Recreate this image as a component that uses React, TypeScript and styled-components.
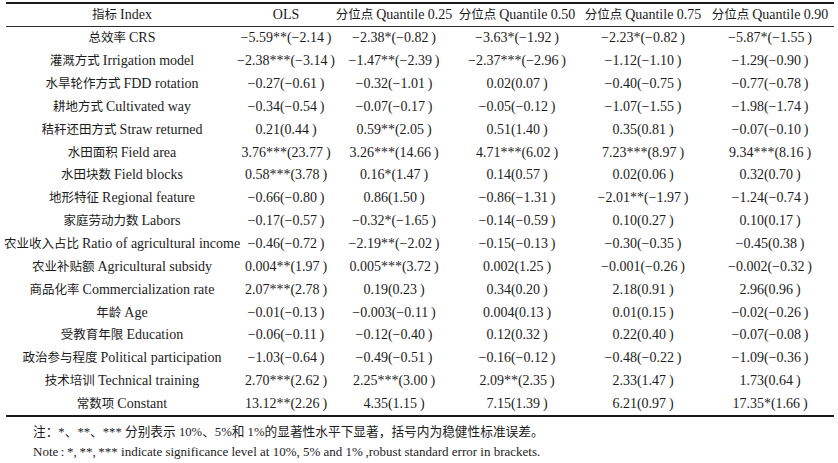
import React from "react";
import styled, { createGlobalStyle } from "styled-components";

const Global = createGlobalStyle`
  html, body { margin: 0; padding: 0; background: #ffffff; }
  body {
    font-family: "Liberation Serif", "Noto Sans CJK SC", serif;
    color: #1c1c1c;
  }
`;

const Page = styled.div`
  width: 838px;
  height: 463px;
  padding: 2px 0 0 6px;
  box-sizing: border-box;
  overflow: hidden;
`;

const Table = styled.table`
  width: 828px;
  table-layout: fixed;
  border-collapse: collapse;
  border-top: 2px solid #1a1a1a;
  border-bottom: 2px solid #1a1a1a;
  font-size: 14px;
`;

const HeadRow = styled.tr`
  border-bottom: 1px solid #2a2a2a;
`;

const Cell = styled.td`
  padding: 0;
  height: 22.85px;
  white-space: nowrap;
  vertical-align: middle;
`;

const HeadCell = styled.th`
  padding: 0;
  height: 22px;
  font-weight: normal;
  white-space: nowrap;
  vertical-align: middle;
`;

const Center = styled.div`
  display: flex;
  justify-content: center;
  align-items: center;
  line-height: 16px;
`;

const Han = styled.span`
  font-size: 12.5px;
  margin-right: 3px;
`;

const Notes = styled.div`
  margin-top: 6px;
  padding-left: 27px;
  line-height: 19px;
  white-space: nowrap;
`;

const NoteLine = styled.div<{ $size: number }>`
  font-size: ${(p) => p.$size}px;
`;

const widths = [232, 96, 120, 126, 126, 128];

const headers = [
  "指标 Index",
  "OLS",
  "分位点 Quantile 0.25",
  "分位点 Quantile 0.50",
  "分位点 Quantile 0.75",
  "分位点 Quantile 0.90",
];

const rows: string[][] = [
  ["总效率 CRS", "−5.59**(−2.14)", "−2.38*(−0.82)", "−3.63*(−1.92)", "−2.23*(−0.82)", "−5.87*(−1.55)"],
  ["灌溉方式 Irrigation model", "−2.38***(−3.14)", "−1.47**(−2.39)", "−2.37***(−2.96)", "−1.12(−1.10)", "−1.29(−0.90)"],
  ["水旱轮作方式 FDD rotation", "−0.27(−0.61)", "−0.32(−1.01)", "0.02(0.07)", "−0.40(−0.75)", "−0.77(−0.78)"],
  ["耕地方式 Cultivated way", "−0.34(−0.54)", "−0.07(−0.17)", "−0.05(−0.12)", "−1.07(−1.55)", "−1.98(−1.74)"],
  ["秸秆还田方式 Straw returned", "0.21(0.44)", "0.59**(2.05)", "0.51(1.40)", "0.35(0.81)", "−0.07(−0.10)"],
  ["水田面积 Field area", "3.76***(23.77)", "3.26***(14.66)", "4.71***(6.02)", "7.23***(8.97)", "9.34***(8.16)"],
  ["水田块数 Field blocks", "0.58***(3.78)", "0.16*(1.47)", "0.14(0.57)", "0.02(0.06)", "0.32(0.70)"],
  ["地形特征 Regional feature", "−0.66(−0.80)", "0.86(1.50)", "−0.86(−1.31)", "−2.01**(−1.97)", "−1.24(−0.74)"],
  ["家庭劳动力数 Labors", "−0.17(−0.57)", "−0.32*(−1.65)", "−0.14(−0.59)", "0.10(0.27)", "0.10(0.17)"],
  ["农业收入占比 Ratio of agricultural income", "−0.46(−0.72)", "−2.19**(−2.02)", "−0.15(−0.13)", "−0.30(−0.35)", "−0.45(0.38)"],
  ["农业补贴额 Agricultural subsidy", "0.004**(1.97)", "0.005***(3.72)", "0.002(1.25)", "−0.001(−0.26)", "−0.002(−0.32)"],
  ["商品化率 Commercialization rate", "2.07***(2.78)", "0.19(0.23)", "0.34(0.20)", "2.18(0.91)", "2.96(0.96)"],
  ["年龄 Age", "−0.01(−0.13)", "−0.003(−0.11)", "0.004(0.13)", "0.01(0.15)", "−0.02(−0.26)"],
  ["受教育年限 Education", "−0.06(−0.11)", "−0.12(−0.40)", "0.12(0.32)", "0.22(0.40)", "−0.07(−0.08)"],
  ["政治参与程度 Political participation", "−1.03(−0.64)", "−0.49(−0.51)", "−0.16(−0.12)", "−0.48(−0.22)", "−1.09(−0.36)"],
  ["技术培训 Technical training", "2.70***(2.62)", "2.25***(3.00)", "2.09**(2.35)", "2.33(1.47)", "1.73(0.64)"],
  ["常数项 Constant", "13.12**(2.26)", "4.35(1.15)", "7.15(1.39)", "6.21(0.97)", "17.35*(1.66)"],
];

const fmt = (v: string) => v.replace(")", "\u2009)");

function Label({ text }: { text: string }) {
  const i = text.indexOf(" ");
  if (i < 0 || !/[\u4e00-\u9fff]/.test(text[0])) return <>{text}</>;
  return (
    <>
      <Han>{text.slice(0, i)}</Han>
      {text.slice(i + 1)}
    </>
  );
}

export default function App() {
  return (
    <>
      <Global />
      <Page>
        <Table>
          <colgroup>
            {widths.map((w, i) => (
              <col key={i} style={{ width: w }} />
            ))}
          </colgroup>
          <thead>
            <HeadRow>
              {headers.map((h) => (
                <HeadCell key={h}>
                  <Center>
                    <Label text={h} />
                  </Center>
                </HeadCell>
              ))}
            </HeadRow>
          </thead>
          <tbody>
            {rows.map((r) => (
              <tr key={r[0]}>
                {r.map((c, i) => (
                  <Cell key={i}>
                    <Center>{i === 0 ? <Label text={c} /> : fmt(c)}</Center>
                  </Cell>
                ))}
              </tr>
            ))}
          </tbody>
        </Table>
        <Notes>
          <NoteLine $size={12.7}>
            注：*、**、*** 分别表示 10%、5%和 1%的显著性水平下显著，括号内为稳健性标准误差。
          </NoteLine>
          <NoteLine $size={13}>
            {"Note\u2009:\u2009*,\u2009**,\u2009*** indicate significance level at 10%, 5% and 1%\u2009,robust standard error in brackets."}
          </NoteLine>
        </Notes>
      </Page>
    </>
  );
}
